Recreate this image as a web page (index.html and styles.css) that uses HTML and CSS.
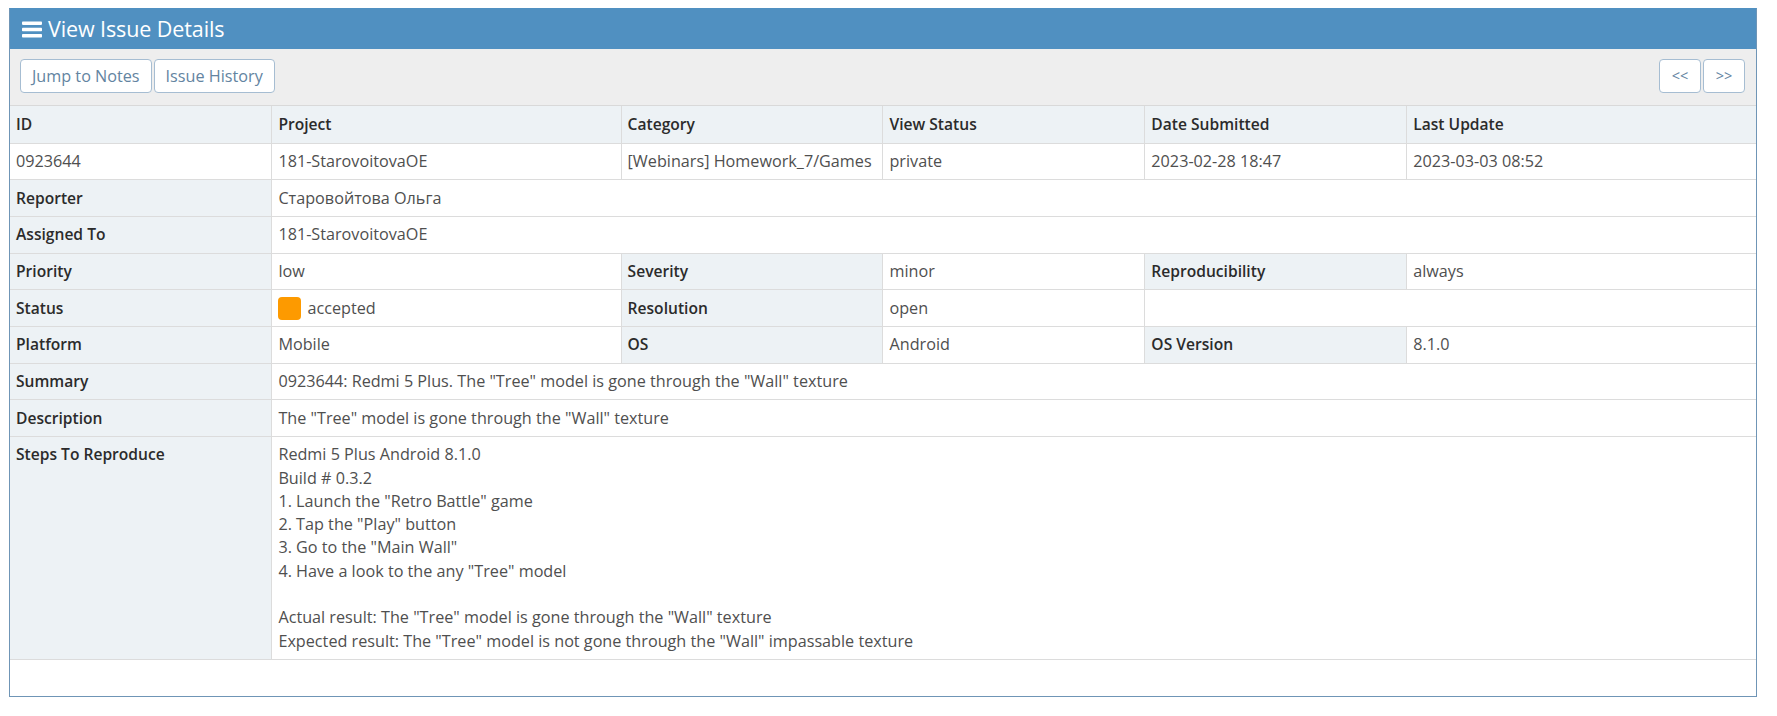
FILE: index.html
```html
<!DOCTYPE html>
<html lang="en">
<head>
<meta charset="utf-8">
<title>View Issue Details</title>
<link rel="stylesheet" href="styles.css">
</head>
<body>
<div class="page">
  <div class="widget">
    <div class="widget-header">
      <svg class="bars" viewBox="0 0 20 17" width="20" height="17" aria-hidden="true">
        <rect x="0" y="0.5" width="20" height="3.4" rx="0.8" fill="#fff"/>
        <rect x="0" y="6.8" width="20" height="3.4" rx="0.8" fill="#fff"/>
        <rect x="0" y="13.1" width="20" height="3.4" rx="0.8" fill="#fff"/>
      </svg>
      <h4 class="widget-title">View Issue Details</h4>
    </div>
    <div class="toolbar">
      <div class="btn-group">
        <a class="btn">Jump to Notes</a>
        <a class="btn">Issue History</a>
      </div>
      <div class="btn-group">
        <a class="btn btn-nav">&lt;&lt;</a>
        <a class="btn btn-nav">&gt;&gt;</a>
      </div>
    </div>
    <table class="details">
      <colgroup>
        <col class="w15"><col class="w20"><col class="w15"><col class="w15"><col class="w15"><col class="w20">
      </colgroup>
      <tbody>
        <tr class="head-row">
          <td class="cat">ID</td>
          <td class="cat">Project</td>
          <td class="cat">Category</td>
          <td class="cat">View Status</td>
          <td class="cat">Date Submitted</td>
          <td class="cat">Last Update</td>
        </tr>
        <tr>
          <td>0923644</td>
          <td>181-StarovoitovaOE</td>
          <td>[Webinars] Homework_7/Games</td>
          <td>private</td>
          <td>2023-02-28 18:47</td>
          <td>2023-03-03 08:52</td>
        </tr>
        <tr>
          <td class="cat">Reporter</td>
          <td colspan="5">Старовойтова Ольга</td>
        </tr>
        <tr>
          <td class="cat">Assigned To</td>
          <td colspan="5">181-StarovoitovaOE</td>
        </tr>
        <tr>
          <td class="cat">Priority</td>
          <td>low</td>
          <td class="cat">Severity</td>
          <td>minor</td>
          <td class="cat">Reproducibility</td>
          <td>always</td>
        </tr>
        <tr>
          <td class="cat">Status</td>
          <td><span class="status-box"></span>accepted</td>
          <td class="cat">Resolution</td>
          <td>open</td>
          <td colspan="2"></td>
        </tr>
        <tr>
          <td class="cat">Platform</td>
          <td>Mobile</td>
          <td class="cat">OS</td>
          <td>Android</td>
          <td class="cat">OS Version</td>
          <td>8.1.0</td>
        </tr>
        <tr>
          <td class="cat">Summary</td>
          <td colspan="5">0923644: Redmi 5 Plus. The "Tree" model is gone through the "Wall" texture</td>
        </tr>
        <tr>
          <td class="cat">Description</td>
          <td colspan="5">The "Tree" model is gone through the "Wall" texture</td>
        </tr>
        <tr>
          <td class="cat">Steps To Reproduce</td>
          <td colspan="5">Redmi 5 Plus Android 8.1.0<br>Build # 0.3.2<br>1. Launch the "Retro Battle" game<br>2. Tap the "Play" button<br>3. Go to the "Main Wall"<br>4. Have a look to the any "Tree" model<br><br>Actual result: The "Tree" model is gone through the "Wall" texture<br>Expected result: The "Tree" model is not gone through the "Wall" impassable texture</td>
        </tr>
        <tr class="spacer">
          <td colspan="6">&nbsp;</td>
        </tr>
      </tbody>
    </table>
  </div>
</div>
</body>
</html>
```

FILE: styles.css
```css
* { box-sizing: border-box; }

html, body {
  margin: 0;
  padding: 0;
  background: #fff;
}

body {
  font-family: "Open Sans", "Liberation Sans", sans-serif;
  font-size: 16.2px;
  line-height: 23.3px;
  color: #393939;
}

.page {
  padding: 8px 20px 19px 9px;
}

.widget {
  border: 1px solid #6f95b6;
  border-top-color: #5090c1;
  background: #fff;
}

.widget-header {
  display: flex;
  align-items: center;
  height: 40px;
  background: #5090c1;
  padding-left: 12px;
  color: #fff;
}

.bars {
  display: block;
  margin-right: 6px;
  flex: none;
}

.widget-title {
  margin: 0;
  font-size: 21.5px;
  font-weight: 400;
  line-height: 40px;
  color: #fff;
  letter-spacing: -0.1px;
}

.toolbar {
  display: flex;
  justify-content: space-between;
  align-items: center;
  background: #eeeeee;
  border-bottom: 1px solid #d9d9d9;
  padding: 10px 11px 12px 10px;
}

.btn-group {
  display: flex;
  gap: 2px;
}

.btn {
  display: inline-block;
  height: 34px;
  line-height: 32px;
  padding: 0 11px;
  background: #fff;
  border: 1px solid #a6bdd2;
  border-radius: 4px;
  color: #6384a1;
  font-size: 16.2px;
  text-decoration: none;
  white-space: nowrap;
}

.btn-nav {
  width: 42px;
  padding: 0;
  text-align: center;
  font-size: 14.5px;
}

.details {
  width: 100%;
  table-layout: fixed;
  border-collapse: collapse;
}

.w15 { width: 15%; }
.w20 { width: 20%; }

.details td {
  border: 1px solid #dcdcdc;
  padding: 6.2px 6px;
  vertical-align: top;
  color: #4f4f4f;
  white-space: nowrap;
  overflow: hidden;
}

.details tr:first-child td { border-top: 0; padding-top: 7.2px; }
.details tr:last-child td { border-bottom: 0; }
.details td:first-child { border-left: 0; }
.details td:last-child { border-right: 0; }

.details td.cat {
  background: #edf2f5;
  font-size: 15.6px;
  font-weight: 600;
  color: #2b2b2b;
}

.status-box {
  display: inline-block;
  width: 23px;
  height: 23px;
  border-radius: 4px;
  background: #fd9a00;
  vertical-align: -6px;
  margin-right: 6px;
}

.spacer td {
  height: 35px;
}
```
